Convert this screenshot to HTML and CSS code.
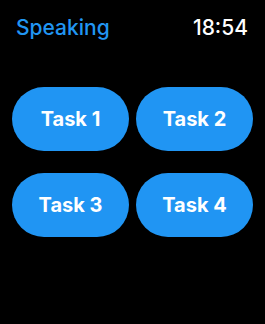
FILE: index.html
```html
<!DOCTYPE html>
<html lang="en">
<head>
    <meta charset="UTF-8">
    <meta name="viewport" content="width=device-width, initial-scale=1.0">
    <title>Speaking</title>
    <link rel="stylesheet" href="styles.css">
</head>
<body>
    <div class="header">
        <span class="title">Speaking</span>
        <span class="clock">18:54</span>
    </div>

    <div class="tasks">
        <button class="task">Task 1</button>
        <button class="task">Task 2</button>
        <button class="task">Task 3</button>
        <button class="task">Task 4</button>
    </div>
</body>
</html>
```

FILE: styles.css
```css
body {
    font-family: Inter, "Open Sans", sans-serif;
    margin: 0;
    padding: 0;
    background-color: #000;
    width: 265px;
    height: 324px;
}
.header {
    display: flex;
    justify-content: space-between;
    align-items: center;
    padding: 14px 17px 0 16px;
    height: 26px;
    font-size: 21px;
    font-weight: 500;
}
.title {
    color: #2196f3;
}
.clock {
    color: #fff;
}
.tasks {
    display: grid;
    grid-template-columns: 1fr 1fr;
    gap: 22px 7px;
    padding: 47px 12px 0 12px;
}
.task {
    height: 64px;
    border: none;
    border-radius: 32px;
    background-color: #2095f3;
    color: #fff;
    font-family: Inter, "Open Sans", sans-serif;
    font-size: 20px;
    font-weight: 700;
    padding: 0;
}
```
